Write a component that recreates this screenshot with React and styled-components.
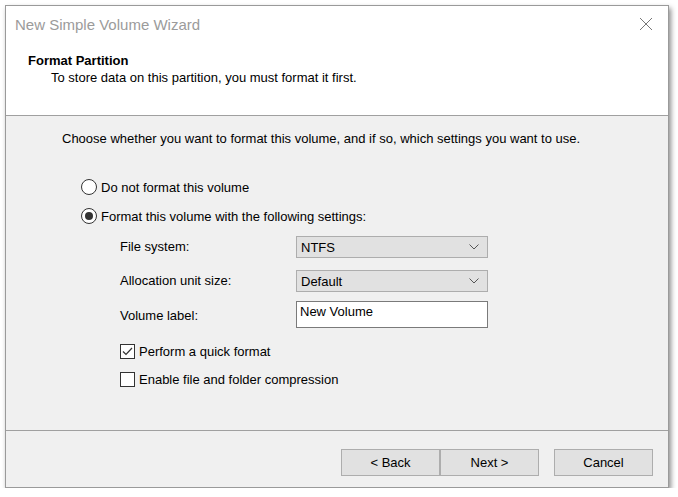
import React from 'react';
import styled, { createGlobalStyle } from 'styled-components';

const Global = createGlobalStyle`
  html, body {
    margin: 0;
    background: #ffffff;
    font-family: "Liberation Sans", Arial, sans-serif;
  }
`;

const Window = styled.div`
  margin: 5px 0 0 5px;
  width: 662px;
  height: 481px;
  border: 1px solid #9a9a9a;
  background: #f0f0f0;
  box-shadow: 2px 3px 5px rgba(0, 0, 0, 0.45);
  display: flex;
  flex-direction: column;
`;

const Top = styled.div`
  background: #ffffff;
  height: 109px;
  border-bottom: 1px solid #a0a0a0;
  display: flex;
  flex-direction: column;
`;

const TitleBar = styled.div`
  height: 36px;
  display: flex;
  align-items: center;
  justify-content: space-between;
  padding: 0 15px 0 9px;
  color: #9b9b9b;
  font-size: 15px;
`;

const Close = styled.svg`
  width: 14px;
  height: 14px;
`;

const Header = styled.div`
  padding: 11px 0 0 22px;
`;

const HeaderTitle = styled.div`
  font-weight: bold;
  font-size: 13px;
  line-height: 16px;
  color: #000;
`;

const HeaderSub = styled.div`
  font-size: 13px;
  line-height: 17px;
  padding-left: 23px;
  color: #000;
`;

const Body = styled.div`
  flex: 1;
  padding: 15px 0 0 56px;
  font-size: 13px;
  color: #000;
`;

const Intro = styled.div`
  line-height: 16px;
  margin-bottom: 32px;
`;

const OptionRow = styled.div`
  display: flex;
  align-items: center;
  height: 16px;
  margin-left: ${(p) => p.indent || 19}px;
  margin-bottom: ${(p) => p.gap || 0}px;
  gap: 4px;
`;

const Radio = styled.span`
  width: 14px;
  height: 14px;
  border-radius: 50%;
  border: 1px solid #333;
  background: #fff;
  display: flex;
  align-items: center;
  justify-content: center;
  &::after {
    content: '';
    width: 8px;
    height: 8px;
    border-radius: 50%;
    background: ${(p) => (p.checked ? '#333' : 'transparent')};
  }
`;

const Check = styled.span`
  width: 13px;
  height: 13px;
  border: 1px solid #333;
  background: #fff;
  display: flex;
  align-items: center;
  justify-content: center;
`;

const Fields = styled.div`
  margin: 12px 0 0 58px;
  display: grid;
  grid-template-columns: 176px 192px;
  row-gap: 12px;
  align-items: center;
`;

const FieldLabel = styled.div`
  line-height: 16px;
`;

const Select = styled.div`
  height: 20px;
  border: 1px solid #adadad;
  background: #e1e1e1;
  display: flex;
  align-items: center;
  justify-content: space-between;
  padding: 0 8px 0 4px;
`;

const Input = styled.div`
  height: 27px;
  border: 1px solid #7a7a7a;
  background: #fff;
  padding: 2px 0 0 3px;
  box-sizing: border-box;
  margin-top: -3px;
`;

const Checks = styled.div`
  margin-top: 15px;
`;

const Footer = styled.div`
  height: 57px;
  border-top: 1px solid #a0a0a0;
  display: flex;
  align-items: flex-start;
  justify-content: flex-end;
  padding: 18px 15px 0 0;
  box-sizing: border-box;
`;

const Button = styled.button`
  width: ${(p) => p.w || 99}px;
  height: 27px;
  border: 1px solid #adadad;
  background: #e1e1e1;
  font-family: inherit;
  font-size: 13px;
  color: #000;
  margin-left: ${(p) => p.gap || 0}px;
  padding: 0;
`;

const Chevron = () => (
  <svg width="10" height="6" viewBox="0 0 10 6">
    <path d="M0.5 0.5 L5 5 L9.5 0.5" fill="none" stroke="#555" strokeWidth="1" />
  </svg>
);

export default function App() {
  return (
    <>
      <Global />
      <Window>
        <Top>
          <TitleBar>
            <span>New Simple Volume Wizard</span>
            <Close viewBox="0 0 14 14">
              <path d="M1 1 L13 13 M13 1 L1 13" stroke="#777" strokeWidth="1" />
            </Close>
          </TitleBar>
          <Header>
            <HeaderTitle>Format Partition</HeaderTitle>
            <HeaderSub>To store data on this partition, you must format it first.</HeaderSub>
          </Header>
        </Top>
        <Body>
          <Intro>
            Choose whether you want to format this volume, and if so, which settings you want to use.
          </Intro>
          <OptionRow gap={13}>
            <Radio />
            <span>Do not format this volume</span>
          </OptionRow>
          <OptionRow>
            <Radio checked />
            <span>Format this volume with the following settings:</span>
          </OptionRow>
          <Fields>
            <FieldLabel>File system:</FieldLabel>
            <Select>
              <span>NTFS</span>
              <Chevron />
            </Select>
            <FieldLabel>Allocation unit size:</FieldLabel>
            <Select>
              <span>Default</span>
              <Chevron />
            </Select>
            <FieldLabel>Volume label:</FieldLabel>
            <Input>New Volume</Input>
          </Fields>
          <Checks>
            <OptionRow indent={58} gap={12}>
              <Check>
                <svg width="11" height="9" viewBox="0 0 11 9">
                  <path d="M1 4.5 L4 7.5 L10 1" fill="none" stroke="#333" strokeWidth="1.2" />
                </svg>
              </Check>
              <span>Perform a quick format</span>
            </OptionRow>
            <OptionRow indent={58}>
              <Check />
              <span>Enable file and folder compression</span>
            </OptionRow>
          </Checks>
        </Body>
        <Footer>
          <Button>&lt; Back</Button>
          <Button>Next &gt;</Button>
          <Button gap={15}>Cancel</Button>
        </Footer>
      </Window>
    </>
  );
}
